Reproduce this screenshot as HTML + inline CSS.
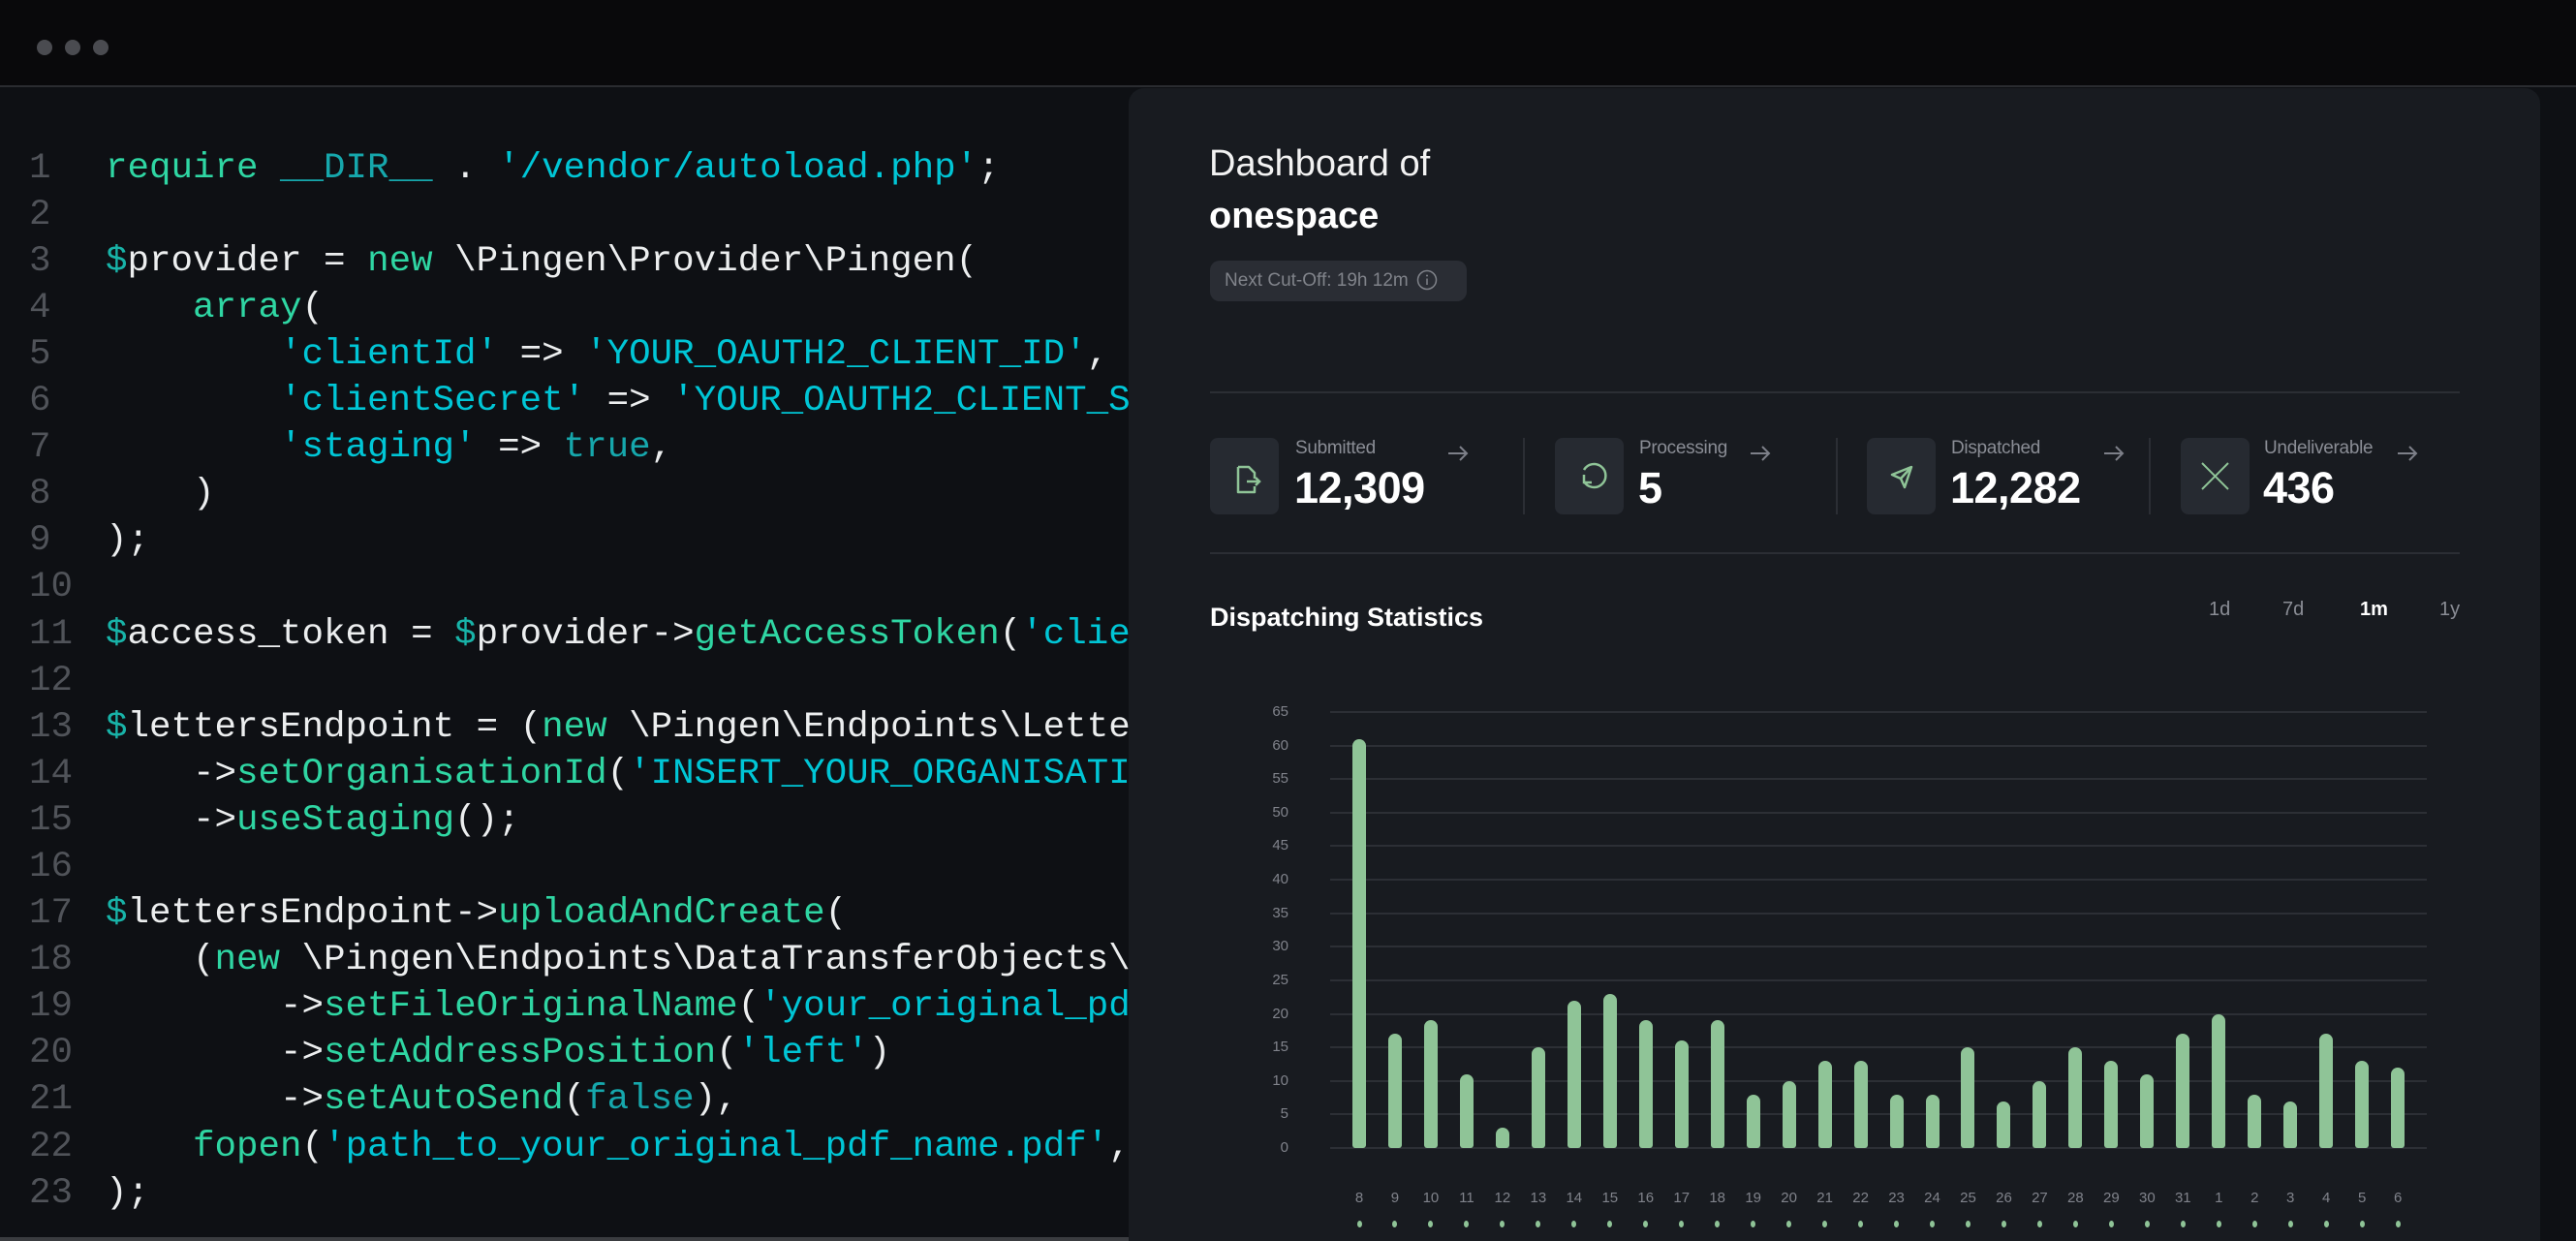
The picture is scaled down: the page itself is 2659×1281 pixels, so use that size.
<!DOCTYPE html>
<html><head><meta charset="utf-8"><style>
*{margin:0;padding:0;box-sizing:border-box}
html,body{width:2659px;height:1281px;overflow:hidden}
body{background:#0e1014;position:relative;font-family:"Liberation Sans",sans-serif}
.top{position:absolute;left:0;top:0;width:2659px;height:90px;background:#09090b;border-bottom:2px solid #2a2c30}
.dot{position:absolute;top:41px;width:16px;height:16px;border-radius:50%;background:#4a4b50}
.code{position:absolute;left:0;top:0;font-family:"Liberation Mono",monospace;font-size:37.5px;color:#eceeef;white-space:pre}
.ln{position:absolute;left:30px;color:#505359;width:60px}
.cl{position:absolute;left:109px}
.k{color:#2fd6a3}.s{color:#00c6d6}.c{color:#16a7ac}.d{color:#18b3a8}
.panel{position:absolute;left:1165px;top:91px;width:1457px;height:1190px;background:#181b20;border-radius:16px 16px 0 0}
.bottomline{position:absolute;left:0;top:1277px;width:1165px;height:4px;background:#3a3c40}
.t{position:absolute;white-space:nowrap}
.hr{position:absolute;left:1249px;width:1290px;height:2px;background:#2b2e34}
.ib{position:absolute;top:452px;width:71px;height:79px;background:#262a31;border-radius:8px}
.lab{position:absolute;top:452px;font-size:19px;color:#8a8d95;letter-spacing:-0.3px}
.num{position:absolute;top:478px;font-size:45px;font-weight:bold;color:#fff;letter-spacing:-0.5px}
.sep{position:absolute;top:452px;width:2px;height:79px;background:#2b2e34}
.arr{position:absolute;top:456px}
.grid{position:absolute;left:1373px;width:1132px;height:2px;background:#2c2f35}
.yl{position:absolute;left:1300px;width:30px;text-align:right;font-size:15px;color:#80838b}
.bar{position:absolute;width:14px;background:#8fc497;border-radius:7px 7px 3px 3px}
.xl{position:absolute;top:1228px;width:40px;text-align:center;font-size:15px;color:#80838b}
.xd{position:absolute;top:1260px;width:5px;height:7px;border-radius:50%;background:#8fc497}
</style></head><body>
<div class="top"><div class="dot" style="left:38px"></div><div class="dot" style="left:67px"></div><div class="dot" style="left:96px"></div></div>
<div class="code">
<div class="ln" style="top:153px">1</div><div class="cl" style="top:153px"><span class="k">require</span> <span class="c">__DIR__</span> . <span class="s">'/vendor/autoload.php'</span>;</div>
<div class="ln" style="top:201px">2</div>
<div class="ln" style="top:249px">3</div><div class="cl" style="top:249px"><span class="d">$</span>provider = <span class="k">new</span> \Pingen\Provider\Pingen(</div>
<div class="ln" style="top:297px">4</div><div class="cl" style="top:297px">    <span class="k">array</span>(</div>
<div class="ln" style="top:345px">5</div><div class="cl" style="top:345px">        <span class="s">'clientId'</span> =&gt; <span class="s">'YOUR_OAUTH2_CLIENT_ID'</span>,</div>
<div class="ln" style="top:393px">6</div><div class="cl" style="top:393px">        <span class="s">'clientSecret'</span> =&gt; <span class="s">'YOUR_OAUTH2_CLIENT_SECRET'</span>,</div>
<div class="ln" style="top:441px">7</div><div class="cl" style="top:441px">        <span class="s">'staging'</span> =&gt; <span class="c">true</span>,</div>
<div class="ln" style="top:489px">8</div><div class="cl" style="top:489px">    )</div>
<div class="ln" style="top:537px">9</div><div class="cl" style="top:537px">);</div>
<div class="ln" style="top:585px">10</div>
<div class="ln" style="top:634px">11</div><div class="cl" style="top:634px"><span class="d">$</span>access_token = <span class="d">$</span>provider-&gt;<span class="k">getAccessToken</span>(<span class="s">'client_credentials'</span>);</div>
<div class="ln" style="top:682px">12</div>
<div class="ln" style="top:730px">13</div><div class="cl" style="top:730px"><span class="d">$</span>lettersEndpoint = (<span class="k">new</span> \Pingen\Endpoints\LettersEndpoint(<span class="d">$</span>access_token))</div>
<div class="ln" style="top:778px">14</div><div class="cl" style="top:778px">    -&gt;<span class="k">setOrganisationId</span>(<span class="s">'INSERT_YOUR_ORGANISATION_UUID_HERE'</span>)</div>
<div class="ln" style="top:826px">15</div><div class="cl" style="top:826px">    -&gt;<span class="k">useStaging</span>();</div>
<div class="ln" style="top:874px">16</div>
<div class="ln" style="top:922px">17</div><div class="cl" style="top:922px"><span class="d">$</span>lettersEndpoint-&gt;<span class="k">uploadAndCreate</span>(</div>
<div class="ln" style="top:970px">18</div><div class="cl" style="top:970px">    (<span class="k">new</span> \Pingen\Endpoints\DataTransferObjects\Letter\LetterCreate())</div>
<div class="ln" style="top:1018px">19</div><div class="cl" style="top:1018px">        -&gt;<span class="k">setFileOriginalName</span>(<span class="s">'your_original_pdf_name.pdf'</span>)</div>
<div class="ln" style="top:1066px">20</div><div class="cl" style="top:1066px">        -&gt;<span class="k">setAddressPosition</span>(<span class="s">'left'</span>)</div>
<div class="ln" style="top:1114px">21</div><div class="cl" style="top:1114px">        -&gt;<span class="k">setAutoSend</span>(<span class="c">false</span>),</div>
<div class="ln" style="top:1163px">22</div><div class="cl" style="top:1163px">    <span class="k">fopen</span>(<span class="s">'path_to_your_original_pdf_name.pdf'</span>, <span class="s">'r'</span>)</div>
<div class="ln" style="top:1211px">23</div><div class="cl" style="top:1211px">);</div>
</div>
<div class="bottomline"></div>
<div class="panel"></div>
<div class="t" style="left:1248px;top:148px;font-size:38px;color:#f2f2f2">Dashboard of</div>
<div class="t" style="left:1248px;top:202px;font-size:38px;font-weight:bold;color:#fff">onespace</div>
<div class="t" style="left:1249px;top:269px;width:265px;height:42px;background:#2a2d34;border-radius:10px;font-size:19px;color:#80838a;line-height:42px;padding-left:15px">Next Cut-Off: 19h 12m <svg width="22" height="22" viewBox="0 0 22 22" style="vertical-align:-5px;margin-left:3px"><circle cx="11" cy="11" r="9.5" fill="none" stroke="#80838a" stroke-width="1.5"/><line x1="11" y1="9.5" x2="11" y2="16" stroke="#80838a" stroke-width="1.5"/><circle cx="11" cy="6.5" r="1" fill="#80838a"/></svg></div>
<div class="hr" style="top:404px"></div>
<div class="hr" style="top:570px"></div>

<div class="ib" style="left:1249px"><svg width="71" height="79" viewBox="0 0 71 79"><path d="M29 30h11l6 6v6M46 50v6H29V30" fill="none" stroke="#8fc497" stroke-width="2.5" stroke-linejoin="round"/><path d="M38 45h13M47 41l4 4-4 4" fill="none" stroke="#8fc497" stroke-width="2.5"/></svg></div>
<div class="lab" style="left:1337px">Submitted</div><div class="num" style="left:1336px">12,309</div>
<svg class="arr" style="left:1493px" width="24" height="24" viewBox="0 0 24 24"><path d="M2 12h19M14 5l7 7-7 7" fill="none" stroke="#7d8089" stroke-width="2"/></svg>
<div class="sep" style="left:1572px"></div>

<div class="ib" style="left:1605px"><svg width="71" height="79" viewBox="0 0 71 79"><path d="M30 45a12 12 0 1 0 0-12" fill="none" stroke="#8fc497" stroke-width="2.5"/><path d="M30 38v8h8" fill="none" stroke="#8fc497" stroke-width="2.5"/></svg></div>
<div class="lab" style="left:1692px">Processing</div><div class="num" style="left:1691px">5</div>
<svg class="arr" style="left:1805px" width="24" height="24" viewBox="0 0 24 24"><path d="M2 12h19M14 5l7 7-7 7" fill="none" stroke="#7d8089" stroke-width="2"/></svg>
<div class="sep" style="left:1895px"></div>

<div class="ib" style="left:1927px"><svg width="71" height="79" viewBox="0 0 71 79"><path d="M46 30L26 38l9 4 4 9z M35 42l11-12" fill="none" stroke="#8fc497" stroke-width="2.5" stroke-linejoin="round"/></svg></div>
<div class="lab" style="left:2014px">Dispatched</div><div class="num" style="left:2013px">12,282</div>
<svg class="arr" style="left:2170px" width="24" height="24" viewBox="0 0 24 24"><path d="M2 12h19M14 5l7 7-7 7" fill="none" stroke="#7d8089" stroke-width="2"/></svg>
<div class="sep" style="left:2218px"></div>

<div class="ib" style="left:2251px"><svg width="71" height="79" viewBox="0 0 71 79"><path d="M22 26l27 27M49 26L22 53" fill="none" stroke="#8fc497" stroke-width="2"/></svg></div>
<div class="lab" style="left:2337px">Undeliverable</div><div class="num" style="left:2336px">436</div>
<svg class="arr" style="left:2473px" width="24" height="24" viewBox="0 0 24 24"><path d="M2 12h19M14 5l7 7-7 7" fill="none" stroke="#7d8089" stroke-width="2"/></svg>

<div class="t" style="left:1249px;top:622px;font-size:27px;font-weight:bold;color:#fff">Dispatching Statistics</div>
<div class="t" style="left:2280px;top:618px;font-size:20px;color:#8a8d95">1d</div>
<div class="t" style="left:2356px;top:618px;font-size:20px;color:#8a8d95">7d</div>
<div class="t" style="left:2436px;top:618px;font-size:20px;color:#fff;font-weight:bold">1m</div>
<div class="t" style="left:2518px;top:618px;font-size:20px;color:#8a8d95">1y</div>

<div id="chart"></div>
<script>
(function(){
var h='';var top=735,bot=1185,u=(bot-top)/65;
for(var i=0;i<=13;i++){var y=bot-i*5*u;h+='<div class="grid" style="top:'+(y-1)+'px"></div><div class="yl" style="top:'+(y-9)+'px">'+(i*5)+'</div>';}
var v=[61,17,19,11,3,15,22,23,19,16,19,8,10,13,13,8,8,15,7,10,15,13,11,17,20,8,7,17,13,12];
var l=[8,9,10,11,12,13,14,15,16,17,18,19,20,21,22,23,24,25,26,27,28,29,30,31,1,2,3,4,5,6];
for(var j=0;j<30;j++){var x=1403+j*36.97;var bh=v[j]*u;
h+='<div class="bar" style="left:'+(x-7)+'px;top:'+(bot-bh)+'px;height:'+bh+'px"></div>';
h+='<div class="xl" style="left:'+(x-20)+'px">'+l[j]+'</div><div class="xd" style="left:'+(x-2.5)+'px"></div>';}
document.getElementById('chart').innerHTML=h;})();
</script>
</body></html>
